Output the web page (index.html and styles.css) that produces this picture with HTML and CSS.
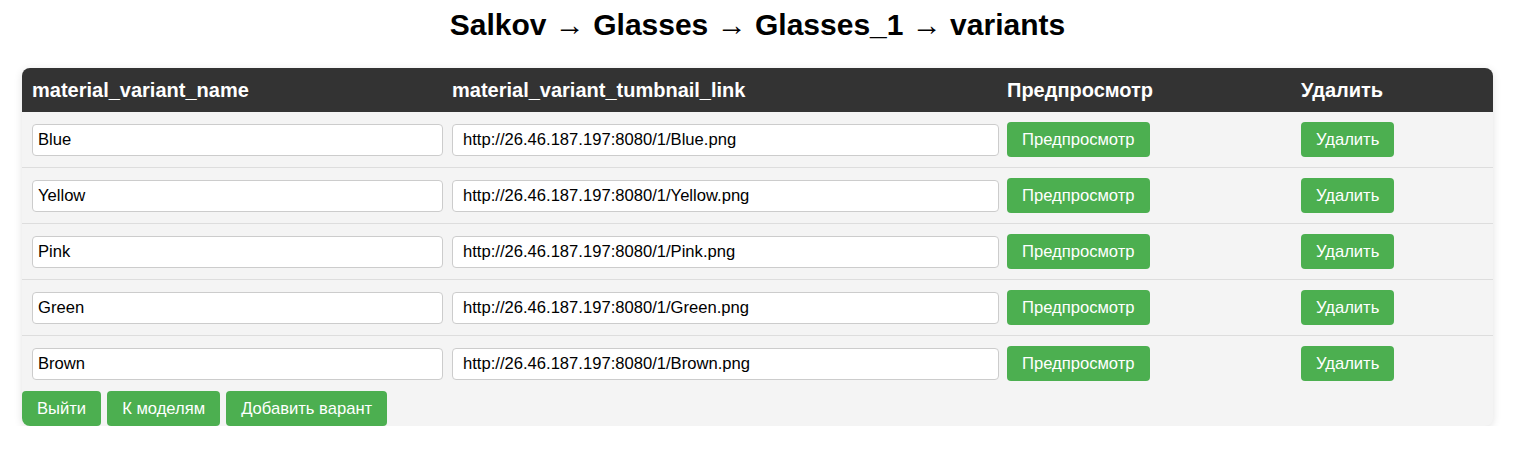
FILE: index.html
```html
<!DOCTYPE html>
<html>
<head>
<meta charset="utf-8">
<link rel="stylesheet" href="styles.css">
</head>
<body>
<h1 class="title">Salkov → Glasses → Glasses_1 → variants</h1>
<div class="panel">
  <table class="grid">
    <colgroup>
      <col class="c1"><col class="c2"><col class="c3"><col class="c4">
    </colgroup>
    <thead>
      <tr><th>material_variant_name</th><th>material_variant_tumbnail_link</th><th>Предпросмотр</th><th>Удалить</th></tr>
    </thead>
    <tbody>
      <tr><td><input class="in name" value="Blue"></td><td><input class="in link" value="http://26.46.187.197:8080/1/Blue.png"></td><td><button class="btn">Предпросмотр</button></td><td><button class="btn">Удалить</button></td></tr>
      <tr><td><input class="in name" value="Yellow"></td><td><input class="in link" value="http://26.46.187.197:8080/1/Yellow.png"></td><td><button class="btn">Предпросмотр</button></td><td><button class="btn">Удалить</button></td></tr>
      <tr><td><input class="in name" value="Pink"></td><td><input class="in link" value="http://26.46.187.197:8080/1/Pink.png"></td><td><button class="btn">Предпросмотр</button></td><td><button class="btn">Удалить</button></td></tr>
      <tr><td><input class="in name" value="Green"></td><td><input class="in link" value="http://26.46.187.197:8080/1/Green.png"></td><td><button class="btn">Предпросмотр</button></td><td><button class="btn">Удалить</button></td></tr>
      <tr><td><input class="in name" value="Brown"></td><td><input class="in link" value="http://26.46.187.197:8080/1/Brown.png"></td><td><button class="btn">Предпросмотр</button></td><td><button class="btn">Удалить</button></td></tr>
    </tbody>
  </table>
  <div class="actions">
    <button class="btn">Выйти</button>
    <button class="btn">К моделям</button>
    <button class="btn">Добавить варант</button>
  </div>
</div>
</body>
</html>
```
FILE: styles.css
```css
* { box-sizing: border-box; }
body {
  margin: 0;
  padding: 0 22px;
  font-family: "Liberation Sans", Arial, sans-serif;
  background: #fff;
  color: #000;
}
.title {
  margin: 0;
  padding-top: 8px;
  height: 68px;
  text-align: center;
  font-size: 30px;
  font-weight: bold;
}
.panel {
  background: #f4f4f4;
  border-radius: 8px;
  overflow: hidden;
  box-shadow: 0 2px 8px rgba(0,0,0,0.12);
}
.grid {
  width: 100%;
  border-collapse: collapse;
  table-layout: fixed;
}
.c1 { width: 420px; }
.c2 { width: 555px; }
.c3 { width: 294px; }
.c4 { width: 202px; }
.grid th {
  background: #333;
  color: #fff;
  text-align: left;
  font-size: 20px;
  font-weight: bold;
  padding: 0 10px;
  height: 44px;
}
.grid td {
  padding: 10px;
  border-bottom: 1px solid #ddd;
  vertical-align: middle;
}
.grid tbody tr:last-child td { border-bottom: none; }
.in {
  height: 32px;
  border: 1px solid #ccc;
  border-radius: 4px;
  background: #fff;
  font-family: "Liberation Sans", Arial, sans-serif;
  font-size: 16.6px;
  color: #000;
  display: block;
}
.in.name { width: 411px; padding: 0 5px; }
.in.link { width: 547px; padding: 0 10px; }
.btn {
  background: #4caf50;
  color: #fff;
  border: none;
  border-radius: 4px;
  font-family: "Liberation Sans", Arial, sans-serif;
  font-size: 16.6px;
  height: 35px;
  padding: 0 15px;
  cursor: pointer;
}
.actions {
  display: flex;
  gap: 6px;
}
```
